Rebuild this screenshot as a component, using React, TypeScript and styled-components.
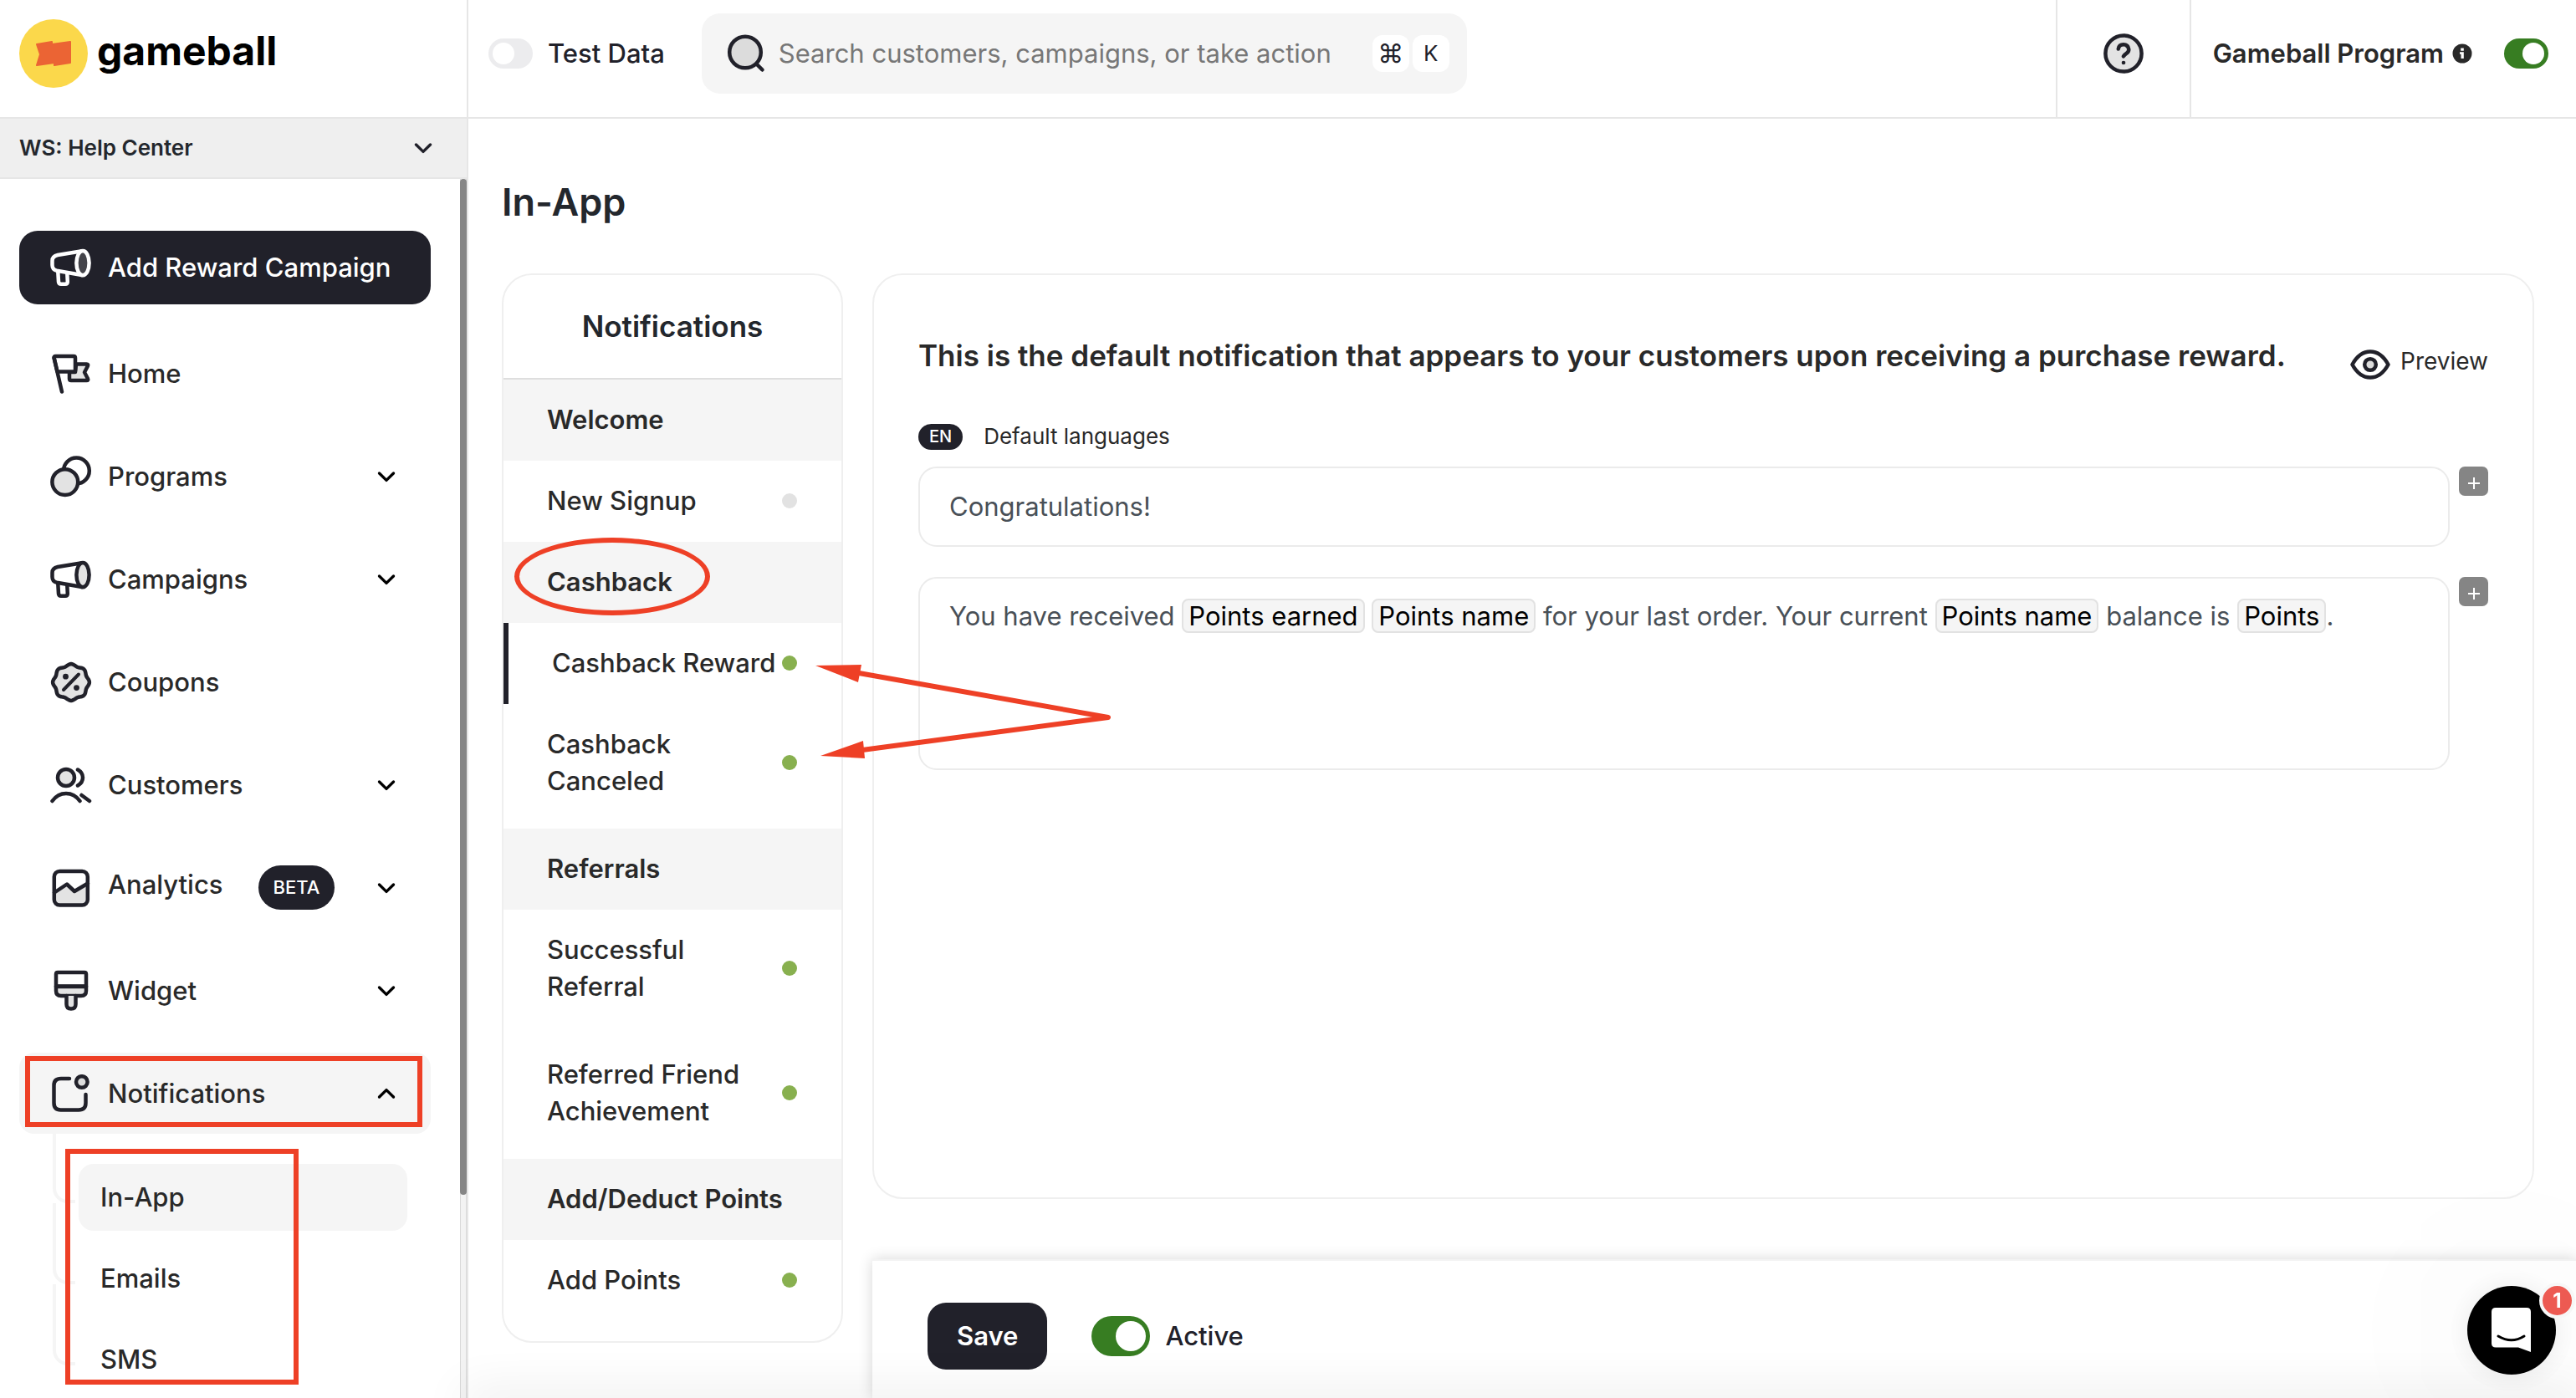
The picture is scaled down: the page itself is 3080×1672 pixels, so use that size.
import React, { useState } from "react";
import styled, { createGlobalStyle, css } from "styled-components";

const ink = "#21212a";
const text = "#292929";
const line = "#e6e6e6";
const soft = "#f5f5f5";
const mark = "#ee4026";
const fill = "#e3e3e3";

const GlobalStyle = createGlobalStyle`
  *, *::before, *::after { box-sizing: border-box; }
  body {
    margin: 0;
    background: #fff;
    color: ${text};
    font-family: Inter, "Liberation Sans", sans-serif;
    font-size: 31px;
    line-height: 44px;
  }
  button, input, select { font: inherit; color: inherit; }
  button { border: 0; background: none; padding: 0; text-align: left; cursor: pointer; }
  a { color: inherit; text-decoration: none; }
  h1, h2, p, ul { margin: 0; padding: 0; }
  ul { list-style: none; }
`;

/* ---------- shell ---------- */

const Shell = styled.div`
  display: grid;
  grid-template-columns: 560px minmax(0, 1fr);
  height: 100vh;
  overflow: hidden;
`;

const Sidebar = styled.aside`
  display: flex;
  flex-direction: column;
  min-height: 0;
  border-right: 2px solid ${line};
`;

const Brand = styled.a`
  display: flex;
  flex: none;
  align-items: center;
  gap: 11px;
  height: 142px;
  padding: 0 23px 12px;
  border-bottom: 2px solid ${line};
`;

const BrandName = styled.span`
  padding-bottom: 6px;
  color: #000;
  font-size: 48px;
  font-weight: 700;
  line-height: 60px;
`;

const Workspace = styled.label`
  display: flex;
  flex: none;
  align-items: center;
  height: 72px;
  padding: 0 40px 0 23px;
  border-bottom: 2px solid ${line};
  background: #efefef;
`;

const WorkspaceSelect = styled.select`
  flex: 1;
  appearance: none;
  border: 0;
  padding: 0;
  background: none;
  color: #23272d;
  font-size: 26px;
  font-weight: 600;
`;

const SideBody = styled.div`
  display: flex;
  flex: 1;
  min-height: 0;
`;

const SideContent = styled.div`
  flex: 1;
  min-width: 0;
  overflow: hidden;
  padding: 62px 35px 0 23px;
`;

const ScrollTrack = styled.div`
  flex: none;
  width: 8px;
  border: solid #d9d9d9;
  border-width: 0 1px;
  background: #f3f3f3;
`;

const ScrollThumb = styled.div`
  width: 8px;
  height: calc(100% * 5 / 6);
  margin: 0 -1px;
  border-radius: 4px;
  background: #868686;
`;

/* ---------- navigation ---------- */

const AddCampaign = styled.button`
  display: flex;
  align-items: center;
  gap: 19px;
  width: 100%;
  height: 88px;
  padding: 0 37px;
  border-radius: 22px;
  background: ${ink};
  color: #fff;
  font-weight: 500;
  white-space: nowrap;
`;

const NavList = styled.ul`
  display: grid;
  gap: 26px;
  padding-top: 34px;
`;

const NavItem = styled.li`
  position: relative;
`;

const NavRow = styled.button<{ $open?: boolean }>`
  display: flex;
  align-items: center;
  gap: 19px;
  width: 100%;
  height: 97px;
  padding: 0 41px 0 37px;
  border-radius: 18px;
  background: ${(p) => (p.$open ? soft : "transparent")};
  font-weight: 500;
`;

const NavLabel = styled.span`
  display: flex;
  flex: 1;
  align-items: baseline;
  gap: 42px;
`;

const Beta = styled.span`
  padding: 0 18px;
  border-radius: 27px;
  background: ${ink};
  color: #fff;
  font-size: 22px;
  line-height: 53px;
`;

const SubList = styled.ul`
  position: relative;
  display: grid;
  gap: 17px;
  padding: 36px 28px 0 71px;
`;

const SubItem = styled.li`
  position: relative;
  &::before {
    content: "";
    position: absolute;
    left: -31px;
    bottom: 33px;
    width: 27px;
    height: 97px;
    border: solid ${soft};
    border-width: 0 0 4px 4px;
    border-bottom-left-radius: 18px;
  }
`;

const SubLink = styled.a<{ $active?: boolean }>`
  display: flex;
  align-items: center;
  height: 80px;
  padding: 0 26px;
  border-radius: 18px;
  background: ${(p) => (p.$active ? soft : "transparent")};
  font-weight: 500;
`;

/* ---------- red mark-up drawn over the page ---------- */

const MarkBox = styled.span<{ $inset: string }>`
  position: absolute;
  z-index: 1;
  inset: ${(p) => p.$inset};
  border: 6px solid ${mark};
  pointer-events: none;
`;

const MarkEllipse = styled.span`
  position: absolute;
  top: -5px;
  left: 13px;
  width: 234px;
  height: 93px;
  border: 6px solid ${mark};
  border-radius: 50%;
  pointer-events: none;
`;

const MarkArrows = styled.svg`
  position: absolute;
  z-index: 1;
  top: 40px;
  left: 369px;
  width: 360px;
  height: 130px;
  pointer-events: none;
`;

/* ---------- top bar ---------- */

const Main = styled.main`
  display: flex;
  flex-direction: column;
  min-width: 0;
  min-height: 0;
`;

const TopBar = styled.header`
  display: flex;
  flex: none;
  height: 142px;
  border-bottom: 2px solid ${line};
`;

const TopCell = styled.div<{ $divided?: boolean; $grow?: boolean }>`
  display: flex;
  flex: ${(p) => (p.$grow ? "1" : "none")};
  align-items: center;
  padding-bottom: 12px;
  ${(p) => p.$divided && css`border-left: 2px solid ${line};`}
`;

const TestCell = styled(TopCell)`
  gap: 44px;
  padding-left: 24px;
`;

const HelpCell = styled(TopCell)`
  justify-content: center;
  width: 160px;
`;

const ProgramCell = styled(TopCell)`
  gap: 10px;
  padding-right: 33px;
  padding-left: 26px;
`;

const SwitchLabel = styled.label`
  display: flex;
  align-items: center;
  gap: 18px;
  color: ${ink};
  font-weight: 500;
`;

const ProgramName = styled.label`
  font-weight: 600;
`;

const Switch = styled.input<{ $large?: boolean }>`
  --w: ${(p) => (p.$large ? "70px" : "53px")};
  --h: ${(p) => (p.$large ? "48px" : "36px")};
  --knob: ${(p) => (p.$large ? "36px" : "26px")};
  display: flex;
  flex: none;
  align-items: center;
  appearance: none;
  width: var(--w);
  height: var(--h);
  margin: 0;
  padding: 0 5px;
  border-radius: 24px;
  background: #ececee;
  &::before {
    content: "";
    width: var(--knob);
    height: var(--knob);
    border-radius: 50%;
    background: #fff;
  }
  &:checked {
    justify-content: flex-end;
    background: #377d22;
  }
`;

const ProgramSwitch = styled.div`
  display: flex;
  margin-left: 28px;
`;

const SearchBox = styled.label`
  display: flex;
  align-items: center;
  gap: 4px;
  width: 915px;
  height: 96px;
  padding: 0 21px 0 30px;
  border-radius: 22px;
  background: ${soft};
`;

const SearchInput = styled.input`
  flex: 1;
  min-width: 0;
  padding: 0 12px;
  border: 0;
  outline: 0;
  background: none;
  &::placeholder { color: #777; opacity: 1; }
`;

const Key = styled.kbd<{ $symbol?: boolean }>`
  display: grid;
  place-items: center;
  width: 44px;
  height: 44px;
  border-radius: 12px;
  background: #fff;
  color: ${ink};
  font-family: inherit;
  font-size: ${(p) => (p.$symbol ? "31px" : "26px")};
`;

/* ---------- page ---------- */

const Page = styled.div`
  display: flex;
  flex: 1;
  flex-direction: column;
  gap: 57px;
  min-height: 0;
  padding: 72px 0 0 40px;
`;

const Title = styled.h1`
  color: #23272d;
  font-size: 45px;
  font-weight: 600;
  line-height: 56px;
`;

const Columns = styled.div`
  display: flex;
  flex: 1;
  align-items: flex-start;
  gap: 35px;
  min-height: 0;
`;

const Card = styled.section`
  border: 2px solid #efefef;
  border-radius: 36px;
`;

const ListCard = styled(Card)`
  flex: none;
  width: 408px;
  padding-bottom: 24px;
`;

const ListTitle = styled.h2`
  border-bottom: 2px solid #dedede;
  color: #23272d;
  font-size: 35px;
  font-weight: 600;
  line-height: 123px;
  text-align: center;
`;

const Group = styled.h2`
  position: relative;
  padding: 26px 52px 27px;
  background: ${soft};
  font-size: 31px;
  font-weight: 600;
  line-height: 44px;
  white-space: nowrap;
`;

const EntryItem = styled.li<{ $tall?: boolean }>`
  position: relative;
  padding-bottom: ${(p) => (p.$tall ? "8px" : "0")};
`;

const Entry = styled.button<{ $active?: boolean }>`
  display: flex;
  align-items: center;
  justify-content: space-between;
  width: 100%;
  padding: 26px 53px 27px 52px;
  font-weight: 500;
  white-space: pre;
  ${(p) => p.$active && css`border-left: 6px solid ${ink};`}
`;

const Dot = styled.span<{ $on?: boolean }>`
  flex: none;
  width: 18px;
  height: 18px;
  border-radius: 50%;
  background: ${(p) => (p.$on ? "#88b04f" : "#e2e2e2")};
`;

const Detail = styled.div`
  display: flex;
  flex: 1;
  flex-direction: column;
  gap: 72px;
  align-self: stretch;
  min-width: 0;
`;

const EditorCard = styled(Card)`
  flex: 1;
  margin-right: 50px;
  padding: 71px 53px 0;
`;

const EditorHead = styled.div`
  display: flex;
  align-items: flex-start;
  justify-content: space-between;
`;

const EditorTitle = styled.h2`
  font-size: 35px;
  font-weight: 600;
  line-height: 50px;
`;

const Preview = styled.button`
  display: flex;
  gap: 12px;
  padding-top: 10px;
  font-size: 28px;
  svg { margin-top: 8px; }
`;

const Language = styled.div`
  display: flex;
  align-items: center;
  gap: 25px;
  margin: 46px 0 14px;
  font-size: 26px;
`;

const LangTag = styled.span`
  padding: 0 13px;
  border-radius: 16px;
  background: ${ink};
  color: #fff;
  font-size: 20px;
  font-weight: 500;
  line-height: 31px;
`;

const FieldRow = styled.div`
  display: flex;
  align-items: flex-start;
  gap: 11px;
  & + & { margin-top: 36px; }
`;

const fieldStyle = css`
  flex: 1;
  min-width: 0;
  border: 2px solid #ebebeb;
  border-radius: 22px;
  outline: 0;
  color: #495057;
`;

const TitleField = styled.input`
  ${fieldStyle}
  height: 96px;
  padding: 0 35px 2px;
`;

const BodyField = styled.div`
  ${fieldStyle}
  min-height: 231px;
  padding: 23px 35px;
`;

const Token = styled.span`
  padding: 0 6px;
  border: 2px solid #e2e2e2;
  border-radius: 8px;
  background: ${soft};
  color: #000;
`;

const AddToken = styled.button`
  display: grid;
  flex: none;
  place-items: center;
  width: 35px;
  height: 35px;
  border-radius: 7px;
  background: #858585;
`;

const ActionBar = styled.footer`
  display: flex;
  flex: none;
  align-items: center;
  gap: 53px;
  height: 166px;
  padding: 16px 66px 0;
  border-top: 2px solid #f3f3f3;
  background: #fff;
  box-shadow: 0 0 16px rgba(0, 0, 0, 0.16);
`;

const Save = styled.button`
  height: 80px;
  padding: 0 35px;
  border-radius: 22px;
  background: ${ink};
  color: #fff;
  font-weight: 600;
`;

const BottomShade = styled.div`
  position: fixed;
  right: 0;
  bottom: -12px;
  left: 560px;
  height: 10px;
  box-shadow: 0 0 56px 6px rgba(0, 0, 0, 0.12);
  pointer-events: none;
`;

const Chat = styled.button`
  position: fixed;
  right: 24px;
  bottom: 28px;
  width: 106px;
  height: 106px;
  border-radius: 50%;
  background: #000;
  box-shadow: 0 2px 32px rgba(0, 0, 0, 0.08), 0 0 200px 10px rgba(0, 0, 0, 0.08);
  svg { display: block; }
`;

const ChatCount = styled.span`
  position: absolute;
  top: -4px;
  right: -23px;
  width: 43px;
  height: 43px;
  border: 4px solid #f7f7f7;
  border-radius: 50%;
  background: #ed5a52;
  color: #fff;
  font-size: 24px;
  font-weight: 700;
  line-height: 35px;
  text-align: center;
`;

/* ---------- icons ---------- */

type IconProps = { w: number; h: number; color?: string; children: React.ReactNode };

const Glyph = styled.svg`
  display: block;
  flex: none;
`;

const Icon = ({ w, h, color = ink, children }: IconProps) => (
  <Glyph width={w} height={h} viewBox={`0 0 ${w} ${h}`} fill="none" stroke={color} strokeWidth="4.5"
    strokeLinecap="round" strokeLinejoin="round" aria-hidden="true">
    {children}
  </Glyph>
);

const Chevron = ({ up, color = "#000" }: { up?: boolean; color?: string }) => (
  <Icon w={24} h={16} color={color}>
    <path strokeWidth="3.4" d={up ? "M3.5 12 12 3.6 20.5 12" : "M3.5 4 12 12.4 20.5 4"} />
  </Icon>
);

const Megaphone = ({ color, lens = fill }: { color?: string; lens?: string }) => (
  <Icon w={50} h={46} color={color}>
    <path d="M38 3.2 9 8Q2.5 9.3 2.5 15v5Q2.5 25.5 8 26.7L38 32" />
    <ellipse cx="39" cy="17.6" rx="7.6" ry="14.6" fill={lens} />
    <path d="M9.3 28 10 40Q10.2 42.7 13 42.7h5Q20.8 42.7 20.8 40L20.3 30" />
  </Icon>
);

const badgePath =
  Array.from({ length: 96 }, (_, i) => {
    const a = (i / 96) * Math.PI * 2;
    const r = 20.8 + 1.1 * Math.cos(8 * a);
    return `${i ? "L" : "M"}${(25 + r * Math.sin(a)).toFixed(2)} ${(25 - r * Math.cos(a)).toFixed(2)}`;
  }).join("") + "Z";

const icons = {
  home: (
    <Icon w={50} h={48}>
      <path fill={fill} d="M31 12.5H43.5Q46 12.5 44.8 15L41 22.3 44.8 29.5Q46 32 43.5 32H25Q23 32 23 30V22H30Z" />
      <path fill="#fff" d="M4.6 5Q4.3 3 6.5 3H28Q30 3 30 5V19.5Q30 21.5 28 21.5H8.5Z" />
      <path d="M4.6 5 14 45.5" />
    </Icon>
  ),
  programs: (
    <Icon w={50} h={50}>
      <circle cx="31.4" cy="18" r="15.4" />
      <circle cx="17.8" cy="31.6" r="15.4" fill={fill} />
    </Icon>
  ),
  campaigns: <Megaphone />,
  coupons: (
    <Icon w={50} h={50}>
      <path d={badgePath} fill={fill} />
      <path strokeWidth="4" d="M16 34 34 15.5" />
      <circle cx="18.5" cy="18.2" r="3.4" fill={ink} stroke="none" />
      <circle cx="31.5" cy="31.6" r="3.4" fill={ink} stroke="none" />
    </Icon>
  ),
  customers: (
    <Icon w={50} h={44}>
      <circle cx="19" cy="13" r="10" fill={fill} />
      <path d="M33 3.5Q39 7 39 13T33 22.5M2.5 41Q9 32 19 32T35.5 41M37.5 34 47 41" />
    </Icon>
  ),
  analytics: (
    <Icon w={50} h={46}>
      <path fill={fill} stroke="none" d="M5 28.5 20 18.5 29 27 45 17.5V42H5Z" />
      <rect x="4.8" y="3" width="40" height="40.5" rx="6.5" />
      <path d="M5 28.5 20 18.5 29 27 45 17.5" />
    </Icon>
  ),
  widget: (
    <Icon w={50} h={50}>
      <path fill={fill} d="M7 19.5H43V25Q43 31 37 31H13Q7 31 7 25Z" />
      <path d="M9 3H41Q43 3 43 5V20H7V5Q7 3 9 3Z" />
      <path fill={fill} d="M19.5 31V41Q19.5 46.5 25 46.5T30.5 41V31" />
    </Icon>
  ),
  notifications: (
    <Icon w={50} h={46}>
      <path d="M23 5H13Q4.5 5 4.5 13V34Q4.5 42.5 12.5 42.5H34Q42.5 42.5 42.5 34V24" />
      <circle cx="37.8" cy="9" r="6.8" fill="#dcdcdc" />
    </Icon>
  ),
};

/* ---------- data ---------- */

type Nav = { icon: keyof typeof icons; label: string; beta?: boolean; menu?: boolean; open?: boolean };

const nav: Nav[] = [
  { icon: "home", label: "Home" },
  { icon: "programs", label: "Programs", menu: true },
  { icon: "campaigns", label: "Campaigns", menu: true },
  { icon: "coupons", label: "Coupons" },
  { icon: "customers", label: "Customers", menu: true },
  { icon: "analytics", label: "Analytics", beta: true, menu: true },
  { icon: "widget", label: "Widget", menu: true },
  { icon: "notifications", label: "Notifications", menu: true, open: true },
];

const groups = [
  { name: "Welcome", entries: [{ label: "New Signup", on: false }] },
  {
    name: "Cashback",
    circled: true,
    entries: [
      { label: "Cashback Reward", on: true, active: true },
      { label: "Cashback\nCanceled", on: true },
    ],
  },
  {
    name: "Referrals",
    entries: [
      { label: "Successful\nReferral", on: true },
      { label: "Referred Friend\nAchievement", on: true },
    ],
  },
  { name: "Add/Deduct Points", entries: [{ label: "Add Points", on: true }] },
] as {
  name: string;
  circled?: boolean;
  entries: { label: string; on: boolean; active?: boolean }[];
}[];

/* ---------- app ---------- */

const PlusButton = ({ label }: { label: string }) => (
  <AddToken type="button" aria-label={label}>
    <Icon w={16} h={18} color="#fff">
      <path strokeWidth="2" strokeLinecap="butt" d="M8 4V18M1 11H15" />
    </Icon>
  </AddToken>
);

export default function App() {
  const [testData, setTestData] = useState(false);
  const [program, setProgram] = useState(true);
  const [active, setActive] = useState(true);
  const [heading, setHeading] = useState("Congratulations!");

  return (
    <>
      <GlobalStyle />
      <Shell>
        <Sidebar>
          <Brand href="#">
            <svg width="82" height="82" viewBox="0 0 82 82" aria-hidden="true">
              <circle cx="41" cy="41" r="41" fill="#fbd84b" />
              <path fill="#eb6434" stroke="#eb6434" strokeWidth="2" strokeLinejoin="round"
                d="M21 30 39 27V30L61 27V52L42 55V52L21 55 25 42Z" />
            </svg>
            <BrandName>gameball</BrandName>
          </Brand>
          <Workspace>
            <WorkspaceSelect aria-label="Workspace">
              <option>WS: Help Center</option>
            </WorkspaceSelect>
            <Chevron color={ink} />
          </Workspace>
          <SideBody>
            <SideContent>
              <AddCampaign type="button">
                <Megaphone color="#fff" lens="#44444a" />
                Add Reward Campaign
              </AddCampaign>
              <nav>
                <NavList>
                  {nav.map((item) => (
                    <NavItem key={item.label}>
                      <NavRow type="button" $open={item.open}>
                        {icons[item.icon]}
                        <NavLabel>
                          {item.label}
                          {item.beta && <Beta>BETA</Beta>}
                        </NavLabel>
                        {item.menu && <Chevron up={item.open} />}
                      </NavRow>
                      {item.open && <MarkBox $inset="4px 10px 8px 7px" />}
                    </NavItem>
                  ))}
                </NavList>
                <SubList>
                  {["In-App", "Emails", "SMS"].map((label) => (
                    <SubItem key={label}>
                      <SubLink href="#" $active={label === "In-App"}>{label}</SubLink>
                    </SubItem>
                  ))}
                  <MarkBox $inset="18px 158px 10px 55px" />
                </SubList>
              </nav>
            </SideContent>
            <ScrollTrack>
              <ScrollThumb />
            </ScrollTrack>
          </SideBody>
        </Sidebar>

        <Main>
          <TopBar>
            <TestCell $grow>
              <SwitchLabel>
                <Switch type="checkbox" checked={testData} onChange={() => setTestData(!testData)} />
                Test Data
              </SwitchLabel>
              <SearchBox>
                <Icon w={46} h={46}>
                  <circle cx="22" cy="21.5" r="18.8" fill="#dcdcdc" />
                  <path d="M36 36 42.5 42.5" />
                </Icon>
                <SearchInput placeholder="Search customers, campaigns, or take action" />
                <Key $symbol>⌘</Key>
                <Key>K</Key>
              </SearchBox>
            </TestCell>
            <HelpCell $divided>
              <button type="button" aria-label="Help">
                <Icon w={48} h={48}>
                  <circle cx="24" cy="24" r="21.6" fill={fill} />
                  <path d="M17.8 18.5Q18.5 13.3 24 13.3T30.3 19Q30.3 22 27.8 23.7T24 27.3" />
                  <circle cx="24" cy="35" r="2.3" fill={ink} stroke="none" />
                </Icon>
              </button>
            </HelpCell>
            <ProgramCell $divided>
              <ProgramName htmlFor="program">Gameball Program</ProgramName>
              <svg width="24" height="24" viewBox="0 0 24 24" aria-hidden="true">
                <circle cx="12" cy="12" r="11.5" fill={text} />
                <path fill="#fff" d="M10.2 5.5h3.6v3.2h-3.6ZM9 10.3h4.8v7.7h-3.3v-5.2H9Z" />
              </svg>
              <ProgramSwitch>
                <Switch id="program" type="checkbox" checked={program} onChange={() => setProgram(!program)} />
              </ProgramSwitch>
            </ProgramCell>
          </TopBar>

          <Page>
            <Title>In-App</Title>
            <Columns>
              <ListCard>
                <ListTitle>Notifications</ListTitle>
                {groups.map((group) => (
                  <React.Fragment key={group.name}>
                    <Group>
                      {group.name}
                      {group.circled && <MarkEllipse />}
                    </Group>
                    <ul>
                      {group.entries.map((entry) => (
                        <EntryItem key={entry.label} $tall={entry.label.includes("\n")}>
                          <Entry type="button" $active={entry.active}>
                            {entry.label}
                            <Dot $on={entry.on} />
                          </Entry>
                          {entry.active && (
                            <MarkArrows viewBox="0 0 360 130" aria-hidden="true">
                              <path fill="none" stroke={mark} strokeWidth="6" strokeLinecap="round" strokeLinejoin="round"
                                d="M56 20 354 73 60 112" />
                              <path fill={mark} d="M4 11 59 10 55 31ZM10 119 61 101 63 122Z" />
                            </MarkArrows>
                          )}
                        </EntryItem>
                      ))}
                    </ul>
                  </React.Fragment>
                ))}
              </ListCard>

              <Detail>
                <EditorCard>
                  <EditorHead>
                    <EditorTitle>
                      This is the default notification that appears to your customers upon receiving a purchase reward.
                    </EditorTitle>
                    <Preview type="button">
                      <Icon w={48} h={36}>
                        <path d="M2.5 18Q11 2.5 24 2.5T45.5 18Q37 33.5 24 33.5T2.5 18Z" />
                        <circle cx="24" cy="18" r="6.8" fill="#dcdcdc" />
                      </Icon>
                      Preview
                    </Preview>
                  </EditorHead>
                  <Language>
                    <LangTag>EN</LangTag>
                    Default languages
                  </Language>
                  <FieldRow>
                    <TitleField aria-label="Title" value={heading} onChange={(e) => setHeading(e.target.value)} />
                    <PlusButton label="Add variable to title" />
                  </FieldRow>
                  <FieldRow>
                    <BodyField role="textbox" aria-label="Message" aria-multiline="true" tabIndex={0}>
                      You have received <Token>Points earned</Token> <Token>Points name</Token> for your last order.
                      Your current <Token>Points name</Token> balance is <Token>Points</Token>.
                    </BodyField>
                    <PlusButton label="Add variable to message" />
                  </FieldRow>
                </EditorCard>
                <ActionBar>
                  <Save type="button">Save</Save>
                  <SwitchLabel>
                    <Switch $large type="checkbox" checked={active} onChange={() => setActive(!active)} />
                    Active
                  </SwitchLabel>
                </ActionBar>
              </Detail>
            </Columns>
          </Page>
        </Main>
      </Shell>
      <BottomShade />
      <Chat type="button" aria-label="Open chat">
        <svg width="106" height="106" viewBox="0 0 106 106" aria-hidden="true">
          <path fill="#fff" d="M34 26H71Q76 26 76 31V79L61 73.5H34Q29 73.5 29 68.5V31Q29 26 34 26Z" />
          <path fill="none" stroke="#000" strokeWidth="3" strokeLinecap="round" d="M37 60Q53 69.5 68 60" />
        </svg>
        <ChatCount>1</ChatCount>
      </Chat>
    </>
  );
}
